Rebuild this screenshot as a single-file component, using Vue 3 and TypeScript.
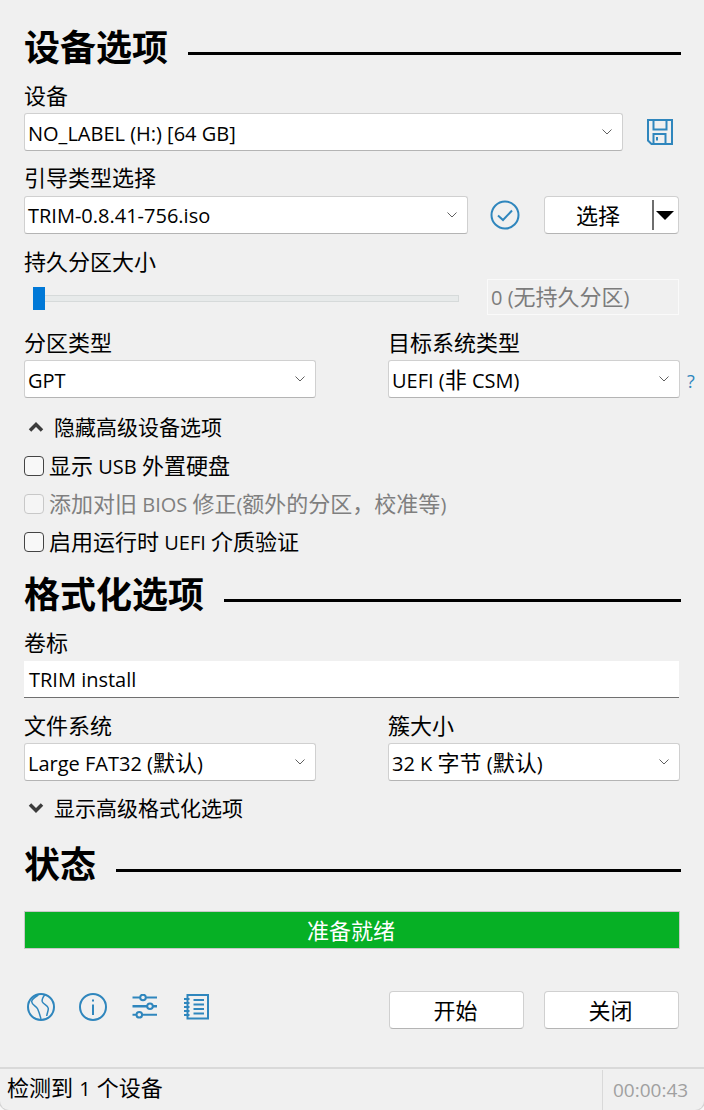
<script setup lang="ts">
const iconColor = '#2f86bd'
</script>

<template>
  <div class="window">
    <main class="main">
      <div class="heading h1"><h2>设备选项</h2><span class="rule"></span></div>
      <div class="label">设备</div>
      <div class="row">
        <div class="select grow"><span class="val">NO_LABEL (H:) [64 GB]</span><svg class="chev" viewBox="0 0 10 6"><path d="M0.5 0.5 5 5 9.5 0.5" /></svg></div>
        <div class="slot save">
          <svg width="26" height="26" viewBox="0 0 26 26" fill="none" :stroke="iconColor" stroke-width="2">
            <path d="M1 1H25V25H4.500L1 21.500Z" />
            <path d="M6.500 1V10.500H19.500V1" />
            <path d="M6.500 25V15H18.500V25" />
            <path d="M10 18V21.500" />
          </svg>
        </div>
      </div>
      <div class="label next">引导类型选择</div>
      <div class="row">
        <div class="select grow"><span class="val">TRIM-0.8.41-756.iso</span><svg class="chev" viewBox="0 0 10 6"><path d="M0.5 0.5 5 5 9.5 0.5" /></svg></div>
        <div class="slot check">
          <svg width="30" height="30" viewBox="0 0 30 30" fill="none" :stroke="iconColor" stroke-width="2">
            <circle cx="15" cy="15" r="13.500" />
            <path d="M8 15.500 13 20 22 10.500" />
          </svg>
        </div>
        <div class="button pick">
          <span class="pick-text">选择</span>
          <span class="pick-sep"></span>
          <span class="pick-arrow"></span>
        </div>
      </div>
      <div class="label next third">持久分区大小</div>
      <div class="row slider-row">
        <div class="slider"><span class="track"></span><span class="thumb"></span></div>
        <div class="readout">0 (<span class="zh">无持久分区</span>)</div>
      </div>
      <div class="two next-small">
        <div>
          <div class="label">分区类型</div>
          <div class="select"><span class="val">GPT</span><svg class="chev" viewBox="0 0 10 6"><path d="M0.5 0.5 5 5 9.5 0.5" /></svg></div>
        </div>
        <div>
          <div class="label">目标系统类型</div>
          <div class="select"><span class="val">UEFI (<span class="zh">非</span> CSM)</span><svg class="chev" viewBox="0 0 10 6"><path d="M0.5 0.5 5 5 9.5 0.5" /></svg></div>
          <span class="help">?</span>
        </div>
      </div>
      <div class="toggle first">
        <svg width="16" height="10" viewBox="0 0 16 10" fill="none"><path d="M2 8.500 8 2.500 14 8.500" /></svg>
        <span>隐藏高级设备选项</span>
      </div>
      <div class="checks">
        <label class="check-row"><span class="box"></span><span><span class="zh">显示</span> USB <span class="zh">外置硬盘</span></span></label>
        <label class="check-row off"><span class="box"></span><span><span class="zh">添加对旧</span> BIOS <span class="zh">修正</span>(<span class="zh">额外的分区，校准等</span>)</span></label>
        <label class="check-row"><span class="box"></span><span><span class="zh">启用运行时</span> UEFI <span class="zh">介质验证</span></span></label>
      </div>

      <div class="heading h2-row"><h2>格式化选项</h2><span class="rule"></span></div>
      <div class="label l-volume">卷标</div>
      <div class="text-input">TRIM install</div>
      <div class="two next-volume">
        <div>
          <div class="label">文件系统</div>
          <div class="select"><span class="val">Large FAT32 (<span class="zh">默认</span>)</span><svg class="chev" viewBox="0 0 10 6"><path d="M0.5 0.5 5 5 9.5 0.5" /></svg></div>
        </div>
        <div>
          <div class="label">簇大小</div>
          <div class="select"><span class="val">32 K <span class="zh">字节</span> (<span class="zh">默认</span>)</span><svg class="chev" viewBox="0 0 10 6"><path d="M0.5 0.5 5 5 9.5 0.5" /></svg></div>
        </div>
      </div>
      <div class="toggle second">
        <svg width="16" height="10" viewBox="0 0 16 10" fill="none"><path d="M2 1.500 8 7.500 14 1.500" /></svg>
        <span>显示高级格式化选项</span>
      </div>

      <div class="heading h3-row"><h2>状态</h2><span class="rule"></span></div>
      <div class="progress">准备就绪</div>
      <div class="footer">
        <div class="icons">
          <svg class="i-globe" width="30" height="30" viewBox="0 0 30 30" fill="none" :stroke="iconColor" stroke-width="2">
            <circle cx="15" cy="15" r="13" />
            <path stroke-width="1.500" d="M12.300 3 C9 5 5.500 7 5.700 9.700 C6 13 10 14 11.700 17 C13 20 14 23 15 27" />
            <path stroke-width="1.500" d="M19 2.500 C17 5 15.500 7.500 16.300 9.700 C17.500 12.500 22 13 22.300 16.300 C22.500 19 21 21 20.700 24" />
          </svg>
          <svg class="i-info" width="30" height="30" viewBox="0 0 30 30" fill="none" :stroke="iconColor" stroke-width="2">
            <circle cx="15" cy="15" r="13" />
            <path d="M15 12.500V23" />
            <path d="M15 7.500V9.500" />
          </svg>
          <svg class="i-sliders" width="26" height="26" viewBox="0 0 26 26" fill="none" :stroke="iconColor" stroke-width="2">
            <path d="M0.500 3.500H8M14 3.500H25" />
            <circle cx="11" cy="3.500" r="2.800" />
            <path d="M0.500 12.300H15M21 12.300H25" stroke-width="2.500" />
            <circle cx="18" cy="12.300" r="2.800" />
            <path d="M0.500 20.800H4.500M10 20.800H25" />
            <circle cx="7.300" cy="20.800" r="2.800" />
          </svg>
          <svg class="i-notes" width="26" height="26" viewBox="0 0 26 26" fill="none" :stroke="iconColor" stroke-width="2">
            <path d="M3.500 1H24V24.500H3.500Z" />
            <path d="M0 5H5.500M0 9H5.500M0 13H5.500M0 17H5.500M0 21H5.500" />
            <path d="M9.500 6H20M9.500 10.500H20M9.500 15H20M9.500 19.500H20" />
          </svg>
        </div>
        <div class="actions">
          <div class="button act">开始</div>
          <div class="button act">关闭</div>
        </div>
      </div>
    </main>
    <footer class="status">
      <div class="status-text"><span class="zh">检测到</span> 1 <span class="zh">个设备</span></div>
      <div class="status-time">00:00:43</div>
    </footer>
  </div>
</template>

<style>
body { background: #f8f8f8; }
</style>

<style scoped>
.window {
  width: 704px;
  height: 1110px;
  display: flex;
  flex-direction: column;
  background: #f0f0f0;
  color: #000;
  font-family: "Open Sans", "Noto Sans CJK SC", sans-serif;
  font-size: 20px;
  overflow: hidden;
  border-radius: 0 0 9px 9px;
  box-shadow: 0 0 0 1px #d4d4d4;
}
.zh { font-size: 22px; font-family: "Noto Sans CJK SC", sans-serif; line-height: 1; }
.main { flex: 1; padding: 0 24px; position: relative; }
.heading { display: flex; align-items: center; height: 50px; }
.heading h2 { margin: 0 0 4px; font-size: 36px; font-weight: 700; line-height: 46px; font-family: "Noto Sans CJK SC", sans-serif; }
.rule { flex: 1; height: 3px; background: #000; margin: 12px -1px 0 20px; }
.h1 { margin-top: 22px; margin-bottom: 11px; }
.h2-row { margin-top: 14px; margin-bottom: 11px; }
.h3-row { margin-top: 18px; margin-bottom: 22px; }
.label { height: 26px; line-height: 22px; margin-bottom: 4px; font-size: 22px; white-space: nowrap; font-family: "Noto Sans CJK SC", sans-serif; }
.next { margin-top: 14px; }
.third { margin-top: 15px; }
.next-small { margin-top: 15px; }
.next-volume { margin-top: 15px; }
.l-volume { margin-bottom: 5px; }
.row { display: flex; align-items: center; }
.grow { flex: 1; min-width: 0; }
.select {
  height: 38px;
  box-sizing: border-box;
  background: #fff;
  border: 1px solid #d0d0d0;
  border-bottom-color: #b4b4b4;
  border-radius: 3px;
  display: flex;
  align-items: center;
  justify-content: space-between;
  padding: 0 10px 0 3px;
  white-space: nowrap;
}
.val { padding-top: 2px; }
.chev { width: 10px; height: 6px; fill: none; stroke: #606060; stroke-width: 1; flex: none; }
.slot { display: flex; align-items: center; justify-content: center; flex: none; }
.save { width: 57px; padding-left: 24px; box-sizing: border-box; justify-content: flex-start; }
.check { width: 76px; padding-right: 2px; box-sizing: border-box; }
.button {
  background: #fff;
  border: 1px solid #d0d0d0;
  border-bottom-color: #b4b4b4;
  border-radius: 4px;
  box-sizing: border-box;
  height: 38px;
  width: 135px;
  display: flex;
  align-items: center;
  justify-content: center;
  font-size: 22px;
  font-family: "Noto Sans CJK SC", sans-serif;
}
.act { padding: 0 2px 2px 0; }
.pick { position: relative; margin-top: 1px; margin-right: 1px; flex: none; }
.pick-text { position: absolute; left: 31px; top: 2px; line-height: 30px; }
.pick-sep { position: absolute; left: 107px; top: 3px; bottom: 3px; width: 2px; background: #6e6e6e; }
.pick-arrow {
  position: absolute;
  left: 111px;
  top: 14px;
  border-left: 9px solid transparent;
  border-right: 9px solid transparent;
  border-top: 9px solid #000;
}
.slider-row { height: 36px; margin-top: 1px; }
.slider { position: relative; width: 463px; height: 36px; flex: none; }
.track {
  position: absolute;
  left: 9px;
  right: 28px;
  top: 16px;
  height: 7px;
  box-sizing: border-box;
  background: #e7eaea;
  border: 1px solid #d6dada;
}
.thumb { position: absolute; left: 9px; top: 8px; width: 12px; height: 23px; background: #0078d7; }
.readout {
  flex: none;
  margin-left: auto;
  margin-right: 1px;
  width: 192px;
  height: 36px;
  line-height: 36px;
  box-sizing: border-box;
  border: 1px solid #fafafa;
  padding-left: 3px;
  color: #7c7c7c;
  white-space: nowrap;
}
.two { display: grid; grid-template-columns: 292px 292px; column-gap: 72px; }
.two > div { position: relative; }
.help { position: absolute; left: 299px; top: 39px; color: #2f86bd; font-size: 18px; }
.toggle { height: 26px; display: flex; align-items: center; gap: 10px; font-size: 21px; padding-left: 4px; white-space: nowrap; font-family: "Noto Sans CJK SC", sans-serif; }
.toggle span { position: relative; top: -1px; }
.toggle svg { stroke: #3c3c3c; stroke-width: 3.500; flex: none; }
.first { margin-top: 16px; }
.second { margin-top: 14px; }
.checks { margin-top: 13px; display: flex; flex-direction: column; gap: 12px; }
.check-row { height: 26px; display: flex; align-items: center; gap: 5px; white-space: nowrap; }
.box { width: 20px; height: 20px; box-sizing: border-box; border: 1.500px solid #444; border-radius: 4px; background: #f8f8f8; flex: none; }
.off { color: #7f7f7f; }
.off .box { border-color: #c8c8c8; background: #f5f5f5; }
.text-input {
  height: 37px;
  box-sizing: border-box;
  background: #fff;
  border-bottom: 1px solid #707070;
  width: 655px;
  line-height: 38px;
  padding-left: 5px;
}
.progress {
  height: 38px;
  width: 656px;
  box-sizing: border-box;
  background: #06b025;
  border: 1px solid #c8c8c8;
  color: #fff;
  text-align: center;
  line-height: 34px;
  padding-right: 2px;
  font-size: 22px;
  font-family: "Noto Sans CJK SC", sans-serif;
}
.footer { display: flex; align-items: flex-start; justify-content: space-between; margin-top: 42px; }
.icons { display: flex; align-items: center; margin-top: 1px; padding-left: 2px; height: 30px; }
.i-info { margin-left: 22px; }
.i-sliders { margin-left: 24px; }
.i-notes { margin-left: 26px; }
.actions { display: flex; gap: 20px; margin-right: 1px; }
.status {
  height: 43px;
  flex: none;
  display: flex;
  border-top: 2px solid #d9d9d9;
  box-sizing: border-box;
  align-items: stretch;
}
.status-text { width: 602px; padding-left: 7px; box-sizing: border-box; line-height: 40px; white-space: nowrap; word-spacing: 1px; }
.status-time { flex: 1; border-left: 1px solid #d9d9d9; padding-left: 10px; line-height: 40px; color: #a0a0a0; margin-top: 1px; font-size: 19px; }
</style>
